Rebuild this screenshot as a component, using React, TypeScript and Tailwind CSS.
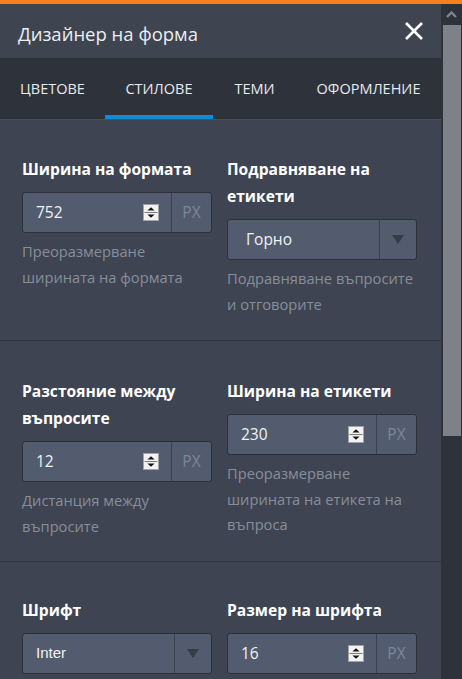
import React from "react";

const tabs = [
  { name: "ЦВЕТОВЕ", w: "w-[105px]" },
  { name: "СТИЛОВЕ", w: "w-[108px]", active: true },
  { name: "ТЕМИ", w: "w-[83px]" },
  { name: "ОФОРМЛЕНИЕ", w: "w-[145px]" },
];

function Spinner() {
  return (
    <svg width="16" height="17" viewBox="0 0 16 17" className="shrink-0">
      <rect x="0.5" y="0.5" width="15" height="16" fill="#f2f2f2" stroke="#a3a3a3" />
      <line x1="1.5" y1="8.5" x2="14.5" y2="8.5" stroke="#7a7a7a" />
      <path d="M8 3.2 L11.6 6.6 H4.4Z" fill="#141414" />
      <path d="M8 13.8 L11.6 10.4 H4.4Z" fill="#141414" />
    </svg>
  );
}

function NumberInput({ value }: { value: string }) {
  return (
    <div className="flex h-[41px] rounded-[3px] border border-[#2c3038] bg-[#525c6e]">
      <div className="flex flex-1 items-center pl-[13px] pr-[12px]">
        <span className="flex-1 text-[15.5px] text-[#f1f2f4]">{value}</span>
        <Spinner />
      </div>
      <div className="flex w-[40px] items-center justify-center border-l border-[#3a414c] text-[15.5px] text-[#7b879a]">
        PX
      </div>
    </div>
  );
}

function Select({ value, mono }: { value: string; mono?: boolean }) {
  return (
    <div className="flex h-[41px] rounded-[3px] border border-[#2c3038] bg-[#525c6e]">
      <div
        className={`flex flex-1 items-center text-[#f1f2f4] ${
          mono ? "pl-[13px] font-['Liberation_Sans',sans-serif] text-[15px]" : "pl-[18px] text-[15.5px]"
        }`}
      >
        {value}
      </div>
      <div className="flex w-[37px] items-center justify-center border-l border-[#3a414c]">
        <svg width="12" height="9" viewBox="0 0 12 9">
          <path d="M0 0 H12 L6 9Z" fill="#363c46" />
        </svg>
      </div>
    </div>
  );
}

function Field({ label, help, children }: { label: React.ReactNode; help?: React.ReactNode; children: React.ReactNode }) {
  return (
    <div>
      <div className="mb-[9px] text-[15.6px] font-bold leading-[27px] text-white">{label}</div>
      {children}
      {help && <div className="mt-[6px] text-[14.7px] leading-[25.5px] text-[#878e9a]">{help}</div>}
    </div>
  );
}

export default function App() {
  return (
    <div className="flex h-[679px] flex-col overflow-hidden bg-[#3e4451] font-['Open_Sans','Noto_Sans',sans-serif]">
      <div className="h-[4px] shrink-0 bg-[#f6801e]" />
      <div className="flex flex-1 overflow-hidden">
        <div className="flex w-[441px] flex-col">
          {/* header */}
          <div className="flex h-[54px] shrink-0 items-center justify-between bg-[#3e4450] pl-[18px] pr-[18px]">
            <span className="pt-[6px] text-[18.5px] text-[#eceef1]">Дизайнер на форма</span>
            <svg width="18" height="18" viewBox="0 0 18 18">
              <path d="M1 1 L17 17 M17 1 L1 17" stroke="#ffffff" strokeWidth="2.6" />
            </svg>
          </div>
          {/* tabs */}
          <div className="flex h-[61px] shrink-0 bg-[#2e323b]">
            {tabs.map((t) => (
              <div
                key={t.name}
                className={`${t.w} flex items-center justify-center border-b-4 pt-[4px] text-[14.5px] text-[#e8eaee] ${
                  t.active ? "border-[#0f8bd9]" : "border-transparent"
                }`}
              >
                {t.name}
              </div>
            ))}
          </div>
          <div className="h-px shrink-0 bg-[#4a505b]" />
          {/* section 1 */}
          <div className="grid grid-cols-[190px_190px] items-start gap-x-[15px] border-b border-[#30353e] px-[22px] pt-[36px] pb-[23px]">
            <Field label="Ширина на формата" help={<>Преоразмерване<br />ширината на формата</>}>
              <NumberInput value="752" />
            </Field>
            <Field label={<>Подравняване на<br />етикети</>} help={<>Подравняване въпросите<br />и отговорите</>}>
              <Select value="Горно" />
            </Field>
          </div>
          {/* section 2 */}
          <div className="grid grid-cols-[190px_190px] items-start gap-x-[15px] border-b border-[#30353e] px-[22px] pt-[37px] pb-[22px]">
            <Field label={<>Разстояние между<br />въпросите</>} help={<>Дистанция между<br />въпросите</>}>
              <NumberInput value="12" />
            </Field>
            <Field
              label="Ширина на етикети"
              help={<>Преоразмерване<br />ширината на етикета на<br />въпроса</>}
            >
              <NumberInput value="230" />
            </Field>
          </div>
          {/* section 3 */}
          <div className="grid grid-cols-[190px_190px] items-start gap-x-[15px] px-[22px] pt-[35px] pb-[24px]">
            <Field label="Шрифт">
              <Select value="Inter" mono />
            </Field>
            <Field label="Размер на шрифта">
              <NumberInput value="16" />
            </Field>
          </div>
        </div>
        {/* scrollbar */}
        <div className="flex w-[21px] flex-col bg-[#2e323b]">
          <div className="flex h-[21px] items-center justify-center">
            <svg width="11" height="7" viewBox="0 0 11 7">
              <path d="M1 6 L5.5 1.5 L10 6" fill="none" stroke="#7f838a" strokeWidth="2.4" />
            </svg>
          </div>
          <div className="ml-[2px] h-[411px] w-[18px] bg-[#7e8187]" />
        </div>
      </div>
    </div>
  );
}
